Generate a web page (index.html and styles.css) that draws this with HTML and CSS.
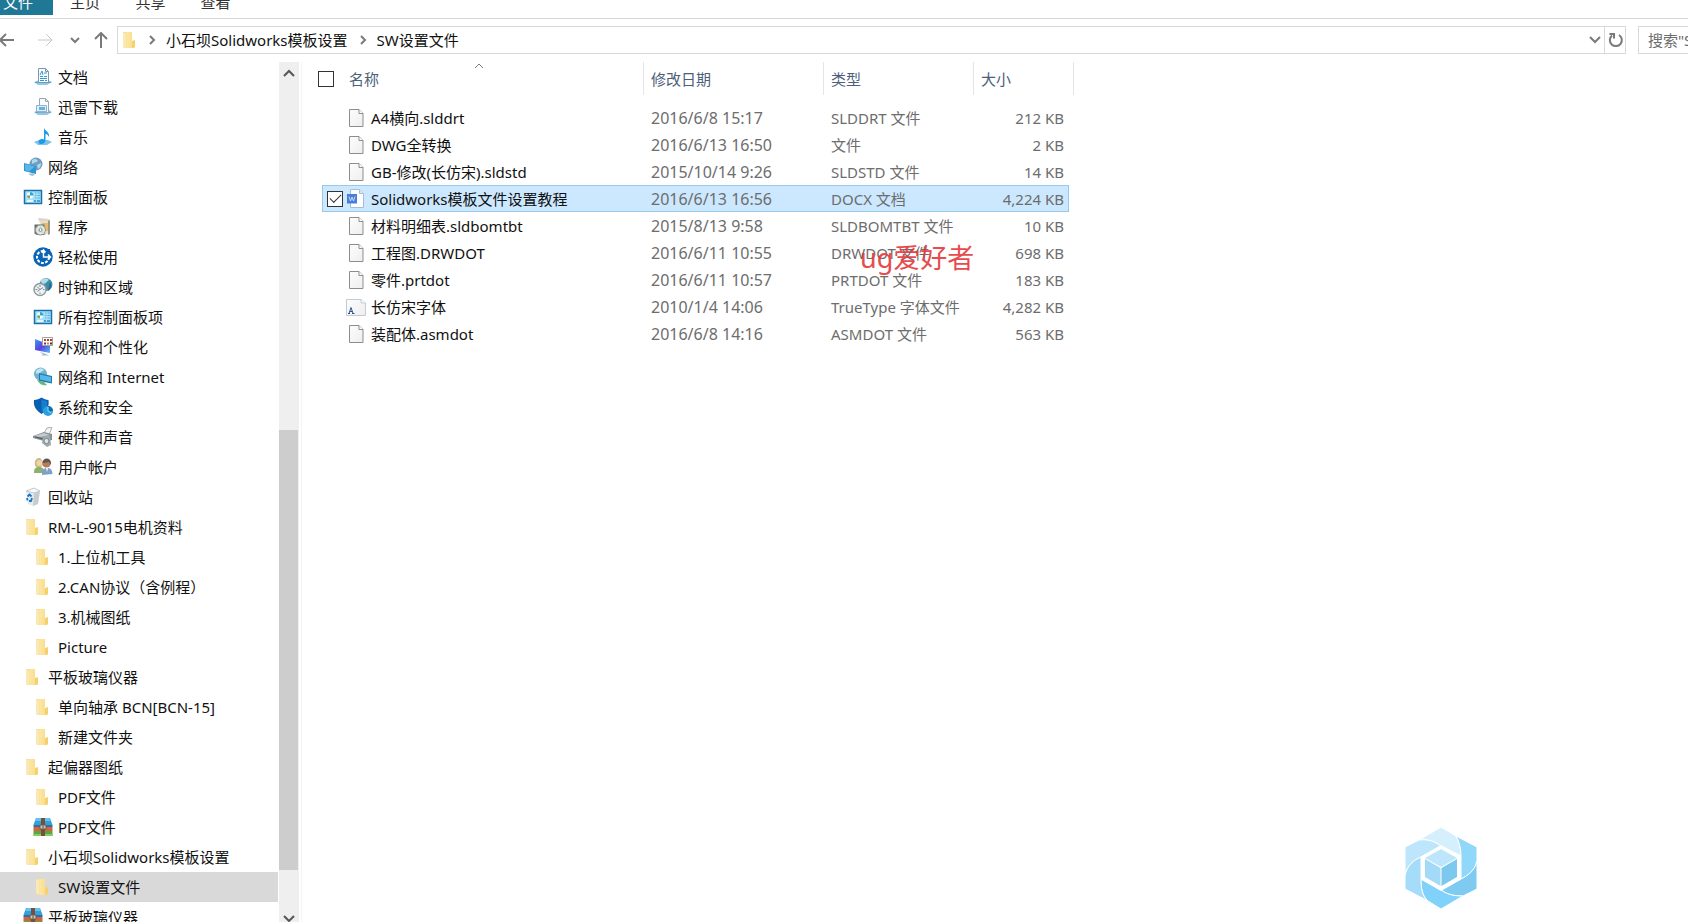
FILE: index.html
```html
<!DOCTYPE html>
<html lang="zh-CN">
<head>
<meta charset="utf-8">
<title>SW设置文件</title>
<link rel="stylesheet" href="styles.css">
</head>
<body>
<svg class="sprite" aria-hidden="true">
  <defs>
    <linearGradient id="gold" x1="0" x2="1"><stop offset="0" stop-color="#f3d277"/><stop offset=".35" stop-color="#fbe6a3"/><stop offset="1" stop-color="#f8da80"/></linearGradient>
    <linearGradient id="violet" x1="0" y1="0" x2="1" y2="1"><stop offset="0" stop-color="#3aa3ee"/><stop offset=".5" stop-color="#5a3fe0"/><stop offset="1" stop-color="#4fc3f0"/></linearGradient>
    <linearGradient id="page" x1="0" y1="0" x2="1" y2="1"><stop offset="0" stop-color="#fdfdfd"/><stop offset="1" stop-color="#eeeeee"/></linearGradient>
  </defs>
  <symbol id="folder" viewBox="0 0 20 20"><path d="M3 2h9v9l3 1v5l-1 1H5l-2-1z" fill="url(#gold)"/><path d="M3 2l3 1.500v14.500l-3-1.500z" fill="#fae9b4"/><path d="M12 11l3-1v7l-3 1z" fill="#f5d06c"/></symbol>
  <symbol id="doc" viewBox="0 0 20 20"><path d="M1 15l5-2h9l4 2-5 3H5z" fill="#8cc9ea"/><path d="M2 15.500h16" stroke="#4fa6d6"/><path d="M5.500 1.500h7l3 3v11h-10z" fill="#f7fcff" stroke="#7d98aa"/><path d="M12.500 1.500v3h3" fill="none" stroke="#7d98aa"/><path d="M7 8l2-4 1 4M11 6h3M7 9.500h3M11 9.500h3M7 11.500h7M7 13.500h4M12 13.500h2" fill="none" stroke="#3a94c8"/></symbol>
  <symbol id="download" viewBox="0 0 20 20"><path d="M1 15l4-2h11l3 2-5 3H5z" fill="#8cc9ea"/><path d="M2 15.500h16" stroke="#62aeda"/><path d="M6.500 1.500h6l3 3v11h-9z" fill="#fafcfd" stroke="#98a8b2"/><path d="M12.500 1.500v3h3" fill="none" stroke="#98a8b2"/><path d="M3.500 8.500h10v6h-10z" fill="#dceffa" stroke="#8fb4ca"/><path d="M6 10h6v3H6z" fill="#64b2e2"/></symbol>
  <symbol id="music" viewBox="0 0 20 20"><path d="M1 15l5-2h9l4 2-5 3H5z" fill="#7cc4ec"/><path d="M11 1c1 3 6 4 5 9-1-2-2-3-3.500-3v6c0 5-7 5-7 2 0-2.500 3-3.500 5.500-2.500z" fill="#1e9be6"/></symbol>
  <symbol id="network" viewBox="0 0 20 20"><circle cx="13" cy="7" r="6.500" fill="#6f9fbe"/><path d="M9 3c3-2 5-1 6 1-2 2-4 1-6 3zM14 8l4-2c0 3-1 5-3 6z" fill="#b3d9ea"/><path d="M1 6l12 3v8L1 14z" fill="#2f94d4"/><path d="M2 7l10 2.500-6 5L2 13z" fill="#5db6e8"/><path d="M5 17l5-1 2 2-3 1z" fill="#a9bfca"/></symbol>
  <symbol id="panel" viewBox="0 0 20 20"><path d="M1.500 3.500h17v13h-17z" fill="#a6e0f8" stroke="#1b70a8" stroke-width="1.500"/><circle cx="7" cy="8.500" r="3.200" fill="#f4fcff"/><path d="M7 8.500V5a3.500 3.500 0 0 1 3.500 3.500z" fill="#35a7cf"/><path d="M4 8.500A3 3 0 0 0 7 11.500V8.500z" fill="#70ad5a"/><path d="M12 6h1.500M14.500 6H17M12 8.500h1.500M14.500 8.500H17M12 11h1.500M14.500 11H17" stroke="#5aaede"/><path d="M4 14h6" stroke="#fff" stroke-width="1.500"/><path d="M11 14h2M14 14h3" stroke="#2a8dc8" stroke-width="1.500"/></symbol>
  <symbol id="programs" viewBox="0 0 20 20"><path d="M5 1l11 1 1 3-11-1z" fill="#d8d5cc"/><path d="M6 4h11v12l-5 2z" fill="#e7dfca"/><path d="M9 6h6v8H9z" fill="#e9b877"/><path d="M15 4l2-1v14l-2 1z" fill="#9d9788"/><path d="M1.500 7.500h10v10.500H4l-2.500-1.500z" fill="#676b6b"/><circle cx="7.500" cy="13" r="5" fill="#dfe7e3" stroke="#929b96"/><circle cx="7.500" cy="13" r="1.500" fill="#fff" stroke="#7d8580"/><path d="M7.500 8v3.500M9 14.500l2 2.500" stroke="#b8d8b8"/></symbol>
  <symbol id="ease" viewBox="0 0 20 20"><circle cx="10" cy="10" r="9.700" fill="#0a63b5"/><circle cx="10" cy="10" r="6" fill="none" stroke="#fff" stroke-width="2" stroke-dasharray="2.800 1.400"/><path d="M10 2h7v7h-7z" fill="#0a63b5"/><path d="M10.500 3.500v6.500H17M15 7.500l2.500 2.500-2.500 2.500M8.500 5.500l2-2.500 2 2.500" fill="none" stroke="#fff" stroke-width="1.500"/></symbol>
  <symbol id="clock" viewBox="0 0 20 20"><circle cx="13" cy="7.500" r="6.500" fill="#3b8eae"/><path d="M7 4c3-4 8-3 9-1-2 1-3 4-6 4z" fill="#b5dbe5"/><path d="M17 5c2 3 1 7-2 9z" fill="#2d6580"/><circle cx="7" cy="12.500" r="6" fill="#eef2f4" stroke="#8e9ba2" stroke-width="1.500"/><path d="M7 8v2M7 15.500v1.500M2.500 12.500h2M10 12.500h1.500M4 9.500l3 3 3-2M7 12.500l-2.500 2" stroke="#7b868d" fill="none"/></symbol>
  <symbol id="looks" viewBox="0 0 20 20"><path d="M2 2l15 6v8L2 13z" fill="url(#violet)"/><path d="M7 15l5 1.500 4 2H8l2-1z" fill="#aebcc5"/><path d="M9.500.500h10v8h-10z" fill="#fff" stroke="#a5a09a"/><path d="M11 3h2M14 3h2M17 3h2" stroke="#c0392b" stroke-width="2"/><path d="M11 6.500h2" stroke="#593a92" stroke-width="2"/><path d="M14 6.500h2" stroke="#d8892b" stroke-width="2"/><path d="M17 6.500h2" stroke="#40323a" stroke-width="2"/></symbol>
  <symbol id="internet" viewBox="0 0 20 20"><circle cx="7.500" cy="7" r="6.500" fill="#6fb1d0"/><path d="M3 4c3-4 7-3 8-1-2 2-2 1-4 3-1 1-3 0-4 1z" fill="#c2e4ee"/><path d="M6 6l13 3v7.500L6 14z" fill="#2479ae"/><path d="M7 7.500l11 2.500v5L7 12.500z" fill="#55b9e8"/><path d="M4 13c3 0 4 2 7 2l3 3c-3 1-7 0-10-5z" fill="#67b57f"/></symbol>
  <symbol id="security" viewBox="0 0 20 20"><path d="M1 3c3 0 5-1 7.500-2.500C11 2 13 3 15.500 3c1 7-2 11-7 14C4 14 0 10 1 3z" fill="#0a5fae"/><path d="M8.500 2C10 3 12 4 14 4c.5 5-1 9-5.500 11z" fill="#147fd0"/><circle cx="15" cy="14" r="5" fill="#2c9fe0"/><path d="M15 14V9a5 5 0 0 1 5 5z" fill="#0c6fb6"/><path d="M15 10v4l3 2" stroke="#9bd7f7" fill="none"/></symbol>
  <symbol id="hardware" viewBox="0 0 20 20"><path d="M11 6l3-5 5-1-3 8z" fill="#f3f5f6" stroke="#a8b0b5"/><path d="M0 9l11-4 8 2v6l-8 1-11-3z" fill="#858e94"/><path d="M1 9l10-3 6 2-9 2z" fill="#c5ccd0"/><path d="M2 10l8 2" stroke="#525b61"/><path d="M10 10l7-2 1 10-4 2-5-4z" fill="#9fa9af"/><circle cx="13.500" cy="14" r="2.500" fill="#e2e7e9" stroke="#7c868c"/></symbol>
  <symbol id="users" viewBox="0 0 20 20"><path d="M1 16c0-4 1-6 5-6s5 2 5 6z" fill="#8fb06d"/><path d="M2 8c-1-5 2-7 4-7s4 2 4 7l-2 2H3z" fill="#cbb98a"/><circle cx="6.500" cy="6" r="3" fill="#f1d3a9"/><path d="M9 18c0-5 1-7 5-7s5 2 5.500 6z" fill="#7fa0cb"/><circle cx="13.500" cy="6.500" r="4" fill="#b57c55"/><path d="M9.500 6c0-6 8-6 8.500-.5V8l-2-3z" fill="#5c5654"/><path d="M13 11l1 4 1-4z" fill="#fff"/></symbol>
  <symbol id="recycle" viewBox="0 0 20 20"><path d="M3 4l8-3 6 3-2 13-5 2-5-2z" fill="#e5e9ec"/><path d="M3 4l8-3 6 3-6 2z" fill="#f7f8f9" stroke="#c3cacf"/><path d="M11 6l6-2-2 13-5 2z" fill="#c6cdd1"/><path d="M4.500 9.500l2-2 2 2M9 11l-1 3H6M4.500 13.500L4 11" fill="none" stroke="#1677c8" stroke-width="1.800"/></symbol>
  <symbol id="archive" viewBox="0 0 20 20"><path d="M3 1h14l2.500 7H.500z" fill="#31a0dc"/><path d="M3.500 1h13l1 3h-15z" fill="#65c4ef"/><path d="M.5 8h19v2H.5z" fill="#2475a5"/><path d="M.5 10h19v4H.5z" fill="#d8603f"/><path d="M.5 14h19v5H.5z" fill="#58a846"/><path d="M.5 17h19v2H.5z" fill="#8bc866"/><path d="M8 1h4v18H8z" fill="#75503a"/><path d="M7 8h6v4H7z" fill="#cfc9bd" stroke="#6b5d4c"/><path d="M10 8.500v3" stroke="#544a40"/></symbol>
  <symbol id="file" viewBox="0 0 20 20"><path d="M3.500 1.500h9.500l4 4v13h-13.500z" fill="url(#page)" stroke="#8d8d8d"/><path d="M13 1.500v4h4" fill="#fff" stroke="#8d8d8d"/></symbol>
  <symbol id="word" viewBox="0 0 20 20"><path d="M4.500.500h9l4 4v14h-13z" fill="#fff" stroke="#a9bdd2"/><path d="M13.500.500v4h4" fill="#dce8f5" stroke="#a9bdd2"/><path d="M1 5h10v9.500H1z" fill="#4a7fd8"/><path d="M3 7.500l1.500 4.500L6 8l1.500 4L9 7.500" fill="none" stroke="#c4d8f8"/></symbol>
  <symbol id="font" viewBox="0 0 20 20"><path d="M.5 2.500H15l4.500 3.500v12.500H.5z" fill="url(#page)" stroke="#c3ccd5"/><path d="M15 2.500V6h4.500" fill="#fff" stroke="#c3ccd5"/><path d="M2 16.500h2M6 16.500h2.500M3 16.500l2-6 2 6M4 14.500h2.500" fill="none" stroke="#2e5590"/></symbol>
</svg>

<header class="ribbon">
  <button class="tab tab-file" type="button">文件</button>
  <button class="tab" type="button">主页</button>
  <button class="tab" type="button">共享</button>
  <button class="tab" type="button">查看</button>
</header>

<div class="toolbar">
  <div class="history">
    <button type="button" aria-label="后退"><svg width="15" height="14" viewBox="0 0 15 14"><path d="M14 7H0M6 1L0 7l6 6" class="stroke-mid"/></svg></button>
    <button type="button" aria-label="前进" class="forward"><svg width="16" height="14" viewBox="0 0 16 14"><path d="M1 7h14M9 1l6 6-6 6" class="stroke-pale"/></svg></button>
    <button type="button" aria-label="最近浏览的位置" class="recent"><svg width="10" height="8" viewBox="0 0 10 8"><path d="M1 2l4 4 4-4" class="stroke-mid"/></svg></button>
    <button type="button" aria-label="上移"><svg width="14" height="16" viewBox="0 0 14 16"><path d="M7 16V2M1 7l6-6 6 6" class="stroke-mid"/></svg></button>
  </div>
  <nav class="address" aria-label="地址栏">
    <svg class="icon"><use href="#folder"/></svg>
    <svg class="crumb-arrow" width="8" height="10" viewBox="0 0 8 10"><path d="M2 1l4 4-4 4" class="stroke-mid"/></svg>
    <a href="#root">小石坝Solidworks模板设置</a>
    <svg class="crumb-arrow" width="8" height="10" viewBox="0 0 8 10"><path d="M2 1l4 4-4 4" class="stroke-mid"/></svg>
    <a href="#sw">SW设置文件</a>
    <button type="button" class="drop" aria-label="以前的位置"><svg width="12" height="8" viewBox="0 0 12 8"><path d="M1 1l5 5 5-5" class="stroke-mid"/></svg></button>
    <button type="button" class="refresh" aria-label="刷新"><svg width="16" height="16" viewBox="0 0 16 16"><path d="M11 3a6 6 0 1 1-7 .5M1.500 2h4.500v4.500" class="stroke-mid"/></svg></button>
  </nav>
  <input class="search" type="text" aria-label="搜索" placeholder='搜索"SW设置文件"'>
</div>

<div class="content">
  <nav class="tree" aria-label="导航窗格">
    <a class="node child" href="#n"><svg class="icon"><use href="#doc"/></svg>文档</a>
    <a class="node child" href="#n"><svg class="icon"><use href="#download"/></svg>迅雷下载</a>
    <a class="node child" href="#n"><svg class="icon"><use href="#music"/></svg>音乐</a>
    <a class="node" href="#n"><svg class="icon"><use href="#network"/></svg>网络</a>
    <a class="node" href="#n"><svg class="icon"><use href="#panel"/></svg>控制面板</a>
    <a class="node child" href="#n"><svg class="icon"><use href="#programs"/></svg>程序</a>
    <a class="node child" href="#n"><svg class="icon"><use href="#ease"/></svg>轻松使用</a>
    <a class="node child" href="#n"><svg class="icon"><use href="#clock"/></svg>时钟和区域</a>
    <a class="node child" href="#n"><svg class="icon"><use href="#panel"/></svg>所有控制面板项</a>
    <a class="node child" href="#n"><svg class="icon"><use href="#looks"/></svg>外观和个性化</a>
    <a class="node child" href="#n"><svg class="icon"><use href="#internet"/></svg>网络和 Internet</a>
    <a class="node child" href="#n"><svg class="icon"><use href="#security"/></svg>系统和安全</a>
    <a class="node child" href="#n"><svg class="icon"><use href="#hardware"/></svg>硬件和声音</a>
    <a class="node child" href="#n"><svg class="icon"><use href="#users"/></svg>用户帐户</a>
    <a class="node" href="#n"><svg class="icon"><use href="#recycle"/></svg>回收站</a>
    <a class="node" href="#n"><svg class="icon"><use href="#folder"/></svg>RM-L-9015电机资料</a>
    <a class="node child" href="#n"><svg class="icon"><use href="#folder"/></svg>1.上位机工具</a>
    <a class="node child" href="#n"><svg class="icon"><use href="#folder"/></svg>2.CAN协议（含例程）</a>
    <a class="node child" href="#n"><svg class="icon"><use href="#folder"/></svg>3.机械图纸</a>
    <a class="node child" href="#n"><svg class="icon"><use href="#folder"/></svg>Picture</a>
    <a class="node" href="#n"><svg class="icon"><use href="#folder"/></svg>平板玻璃仪器</a>
    <a class="node child" href="#n"><svg class="icon"><use href="#folder"/></svg>单向轴承 BCN[BCN-15]</a>
    <a class="node child" href="#n"><svg class="icon"><use href="#folder"/></svg>新建文件夹</a>
    <a class="node" href="#n"><svg class="icon"><use href="#folder"/></svg>起偏器图纸</a>
    <a class="node child" href="#n"><svg class="icon"><use href="#folder"/></svg>PDF文件</a>
    <a class="node child" href="#n"><svg class="icon"><use href="#archive"/></svg>PDF文件</a>
    <a class="node" href="#n"><svg class="icon"><use href="#folder"/></svg>小石坝Solidworks模板设置</a>
    <a class="node child current" href="#sw" aria-current="page"><svg class="icon"><use href="#folder"/></svg>SW设置文件</a>
    <a class="node" href="#n"><svg class="icon"><use href="#archive"/></svg>平板玻璃仪器</a>
  </nav>
  <div class="scrollbar">
    <button type="button" aria-label="向上滚动"><svg width="12" height="8" viewBox="0 0 12 8"><path d="M1 7l5-5 5 5" class="stroke-dark"/></svg></button>
    <div class="track"><div class="thumb"></div></div>
    <button type="button" class="scroll-down" aria-label="向下滚动"><svg width="12" height="8" viewBox="0 0 12 8"><path d="M1 1l5 5 5-5" class="stroke-dark"/></svg></button>
  </div>

  <main class="pane">
    <table class="files">
      <thead>
        <tr>
          <th scope="col" class="name-head"><input class="check" type="checkbox" aria-label="全选">名称<svg class="sort" width="10" height="6" viewBox="0 0 10 6"><path d="M1 5l4-4 4 4" class="stroke-thin"/></svg></th>
          <th scope="col">修改日期</th>
          <th scope="col">类型</th>
          <th scope="col">大小</th>
        </tr>
      </thead>
      <tbody>
        <tr><td class="name"><svg class="icon"><use href="#file"/></svg>A4横向.slddrt</td><td class="date">2016/6/8 15:17</td><td>SLDDRT 文件</td><td class="size">212 KB</td></tr>
        <tr><td class="name"><svg class="icon"><use href="#file"/></svg>DWG全转换</td><td class="date">2016/6/13 16:50</td><td>文件</td><td class="size">2 KB</td></tr>
        <tr><td class="name"><svg class="icon"><use href="#file"/></svg>GB-修改(长仿宋).sldstd</td><td class="date">2015/10/14 9:26</td><td>SLDSTD 文件</td><td class="size">14 KB</td></tr>
        <tr class="selected"><td class="name"><input class="check" type="checkbox" checked aria-label="选择 Solidworks模板文件设置教程"><svg class="icon"><use href="#word"/></svg>Solidworks模板文件设置教程</td><td class="date">2016/6/13 16:56</td><td>DOCX 文档</td><td class="size">4,224 KB</td></tr>
        <tr><td class="name"><svg class="icon"><use href="#file"/></svg>材料明细表.sldbomtbt</td><td class="date">2015/8/13 9:58</td><td>SLDBOMTBT 文件</td><td class="size">10 KB</td></tr>
        <tr><td class="name"><svg class="icon"><use href="#file"/></svg>工程图.DRWDOT</td><td class="date">2016/6/11 10:55</td><td>DRWDOT 文件</td><td class="size">698 KB</td></tr>
        <tr><td class="name"><svg class="icon"><use href="#file"/></svg>零件.prtdot</td><td class="date">2016/6/11 10:57</td><td>PRTDOT 文件</td><td class="size">183 KB</td></tr>
        <tr><td class="name"><svg class="icon"><use href="#font"/></svg>长仿宋字体</td><td class="date">2010/1/4 14:06</td><td>TrueType 字体文件</td><td class="size">4,282 KB</td></tr>
        <tr><td class="name"><svg class="icon"><use href="#file"/></svg>装配体.asmdot</td><td class="date">2016/6/8 14:16</td><td>ASMDOT 文件</td><td class="size">563 KB</td></tr>
      </tbody>
    </table>
    <div class="watermark">ug爱好者</div>
    <svg class="logo" width="72" height="82" viewBox="0 0 72 82" aria-label="标志">
      <g stroke="#fff" stroke-width="1">
        <path d="M36 0L14 13c9-1 15 1 22 6l20 10c0-8-2-15-5-20z" fill="#d5effd"/>
        <path d="M51 9l21 11v14c-2 9-8 14-16 18V29c0-8-2-15-5-20z" fill="#8fd8fa"/>
        <path d="M72 34v28L58 69c-8 0-15-1-22-6l20-11c8-4 14-9 16-18z" fill="#7ecaf0"/>
        <path d="M58 69L36 82 23 74c-6-5-7-13-7-22l20 11c7 5 14 6 22 6z" fill="#80d2fa"/>
        <path d="M23 74L0 62V48c2-9 8-15 16-18v22c0 9 1 17 7 22z" fill="#a5dcfa"/>
        <path d="M0 48V20l14-7c9-1 15 1 22 6L16 30C8 33 2 39 0 48z" fill="#bde6fc"/>
      </g>
      <path d="M36 18l20 11.500v23L36 64 16 52.500v-23z" fill="#fff"/>
      <path d="M36 22l16 9-16 9-16-9z" fill="#bde6fc"/>
      <path d="M20 32l15.500 9v18L20 50z" fill="#a3daf8"/>
      <path d="M52 32l-15.500 9v18L52 50z" fill="#7cc8ee"/>
    </svg>
  </main>
</div>
</body>
</html>
```
FILE: styles.css
```css
* {
  box-sizing: border-box;
}

body {
  margin: 0;
  height: 100vh;
  overflow: hidden;
  display: flex;
  flex-direction: column;
  background: #fff;
  color: #111;
  font-family: "Noto Sans", "Noto Sans CJK SC", sans-serif;
  font-size: 15px;
  line-height: 20px;
}

button {
  padding: 0;
  border: 0;
  background: none;
  font: inherit;
  color: inherit;
}

a {
  color: inherit;
  text-decoration: none;
}

svg {
  display: block;
  flex: none;
}

.sprite {
  position: absolute;
  width: 0;
  height: 0;
}

.icon {
  width: 20px;
  height: 20px;
}

.stroke-mid,
.stroke-pale,
.stroke-dark,
.stroke-thin {
  fill: none;
  stroke: #7a7a7a;
  stroke-width: 2;
}

.stroke-pale {
  stroke: #c8c8c8;
  stroke-width: 1;
}

.stroke-dark {
  stroke: #555;
}

.stroke-thin {
  stroke-width: 1;
}

/* Ribbon */
.ribbon {
  flex: none;
  display: flex;
  align-items: flex-end;
  height: 19px;
  padding-bottom: 3px;
  border-bottom: 1px solid #d6d6d6;
  color: #333;
}

.tab {
  width: 65px;
  height: 26px;
  line-height: 26px;
}

.tab-file {
  width: 53px;
  margin-right: -1px;
  padding-right: 17px;
  background: #1f7896;
  color: #fff;
}

.tab-file + .tab {
  width: 66px;
}

/* Address row */
.toolbar {
  flex: none;
  display: flex;
  margin: 7px 0 8px;
  height: 28px;
}

.history {
  flex: none;
  display: flex;
  align-items: center;
  width: 117px;
}

.forward {
  margin-left: 22px;
}

.recent {
  margin: 0 14px 0 17px;
}

.address {
  flex: 1;
  display: flex;
  align-items: center;
  padding-left: 2px;
  border: 1px solid #d9d9d9;
}

.crumb-arrow {
  margin: 0 10px 0 8px;
}

.crumb-arrow:first-of-type {
  margin-left: 7px;
}

a + .crumb-arrow {
  margin-left: 11px;
}

.drop {
  margin-left: auto;
  padding: 0 3px;
}

.refresh {
  align-self: stretch;
  width: 21px;
  padding-left: 3px;
  border-left: 1px solid #d9d9d9;
}

.search {
  flex: none;
  width: 50px;
  margin-left: 12px;
  padding: 0 0 0 9px;
  border: 1px solid #d9d9d9;
  border-right: 0;
  font: inherit;
}

.search::placeholder {
  color: #6d6d6d;
}

/* Navigation tree */
.content {
  flex: 1;
  min-height: 0;
  display: flex;
}

.tree {
  flex: none;
  width: 278px;
  overflow: hidden;
}

.node {
  display: flex;
  align-items: center;
  gap: 5px;
  height: 30px;
  padding-left: 23px;
  white-space: nowrap;
}

.child {
  padding-left: 33px;
}

.current {
  background: #d9d9d9;
}

.scrollbar {
  flex: none;
  display: flex;
  flex-direction: column;
  width: 20px;
  margin-left: 1px;
  background: #efefef;
}

.scrollbar button {
  display: flex;
  justify-content: center;
  align-items: center;
  height: 22px;
}

.scrollbar .scroll-down {
  height: 6px;
}

.track {
  flex: 1;
  display: flex;
  flex-direction: column;
  padding-bottom: 46px;
}

.thumb {
  width: 19px;
  height: 56%;
  margin-top: auto;
  background: #cdcdcd;
}

/* File list */
.pane {
  flex: 1;
  position: relative;
  margin-left: 2px;
  padding-left: 10px;
  border-left: 1px solid #f3f3f3;
}

.files,
.files thead,
.files tbody {
  display: block;
}

.files tr {
  display: grid;
  grid-template-columns: 321px 180px 150px 96px;
  align-items: center;
  width: fit-content;
  height: 27px;
}

.files thead tr {
  grid-template-columns: 332px 180px 150px 100px;
  align-items: stretch;
  height: 33px;
  color: #4c607a;
}

.files th {
  display: flex;
  align-items: center;
  padding: 0 0 0 7px;
  border-right: 1px solid #e5e5e5;
  font-weight: 400;
}

.files .name-head {
  position: relative;
  gap: 15px;
  padding-left: 6px;
}

.sort {
  position: absolute;
  left: 49%;
  top: 1px;
}

.files tbody {
  margin: 9px 0 0 10px;
}

.files td {
  padding: 0 0 0 8px;
  color: #6d6d6d;
  white-space: nowrap;
}

.files .name {
  display: flex;
  align-items: center;
  gap: 5px;
  padding-left: 24px;
  color: #111;
}

.files .date {
  font-size: 16px;
}

.files .size {
  padding-right: 5px;
  text-align: right;
}

.files .selected {
  background: #cce8ff;
  box-shadow: inset 0 0 0 1px #99c9ea;
}

.selected .name {
  gap: 3px;
  padding-left: 5px;
}

.selected .icon {
  margin-right: 2px;
}

.check {
  appearance: none;
  flex: none;
  display: grid;
  place-items: center;
  width: 16px;
  height: 16px;
  margin: 0;
  border: 1px solid #333;
  background: #fff;
}

.check:checked::before {
  content: "";
  width: 10px;
  height: 5px;
  margin-bottom: 3px;
  border: solid #333;
  border-width: 0 0 1px 1px;
  rotate: -45deg;
}

.watermark {
  position: absolute;
  left: 558px;
  top: 176px;
  color: #e5383b;
  font-size: 27px;
  line-height: 40px;
  opacity: .9;
}

.logo {
  position: absolute;
  right: 211px;
  bottom: 13px;
}
```
